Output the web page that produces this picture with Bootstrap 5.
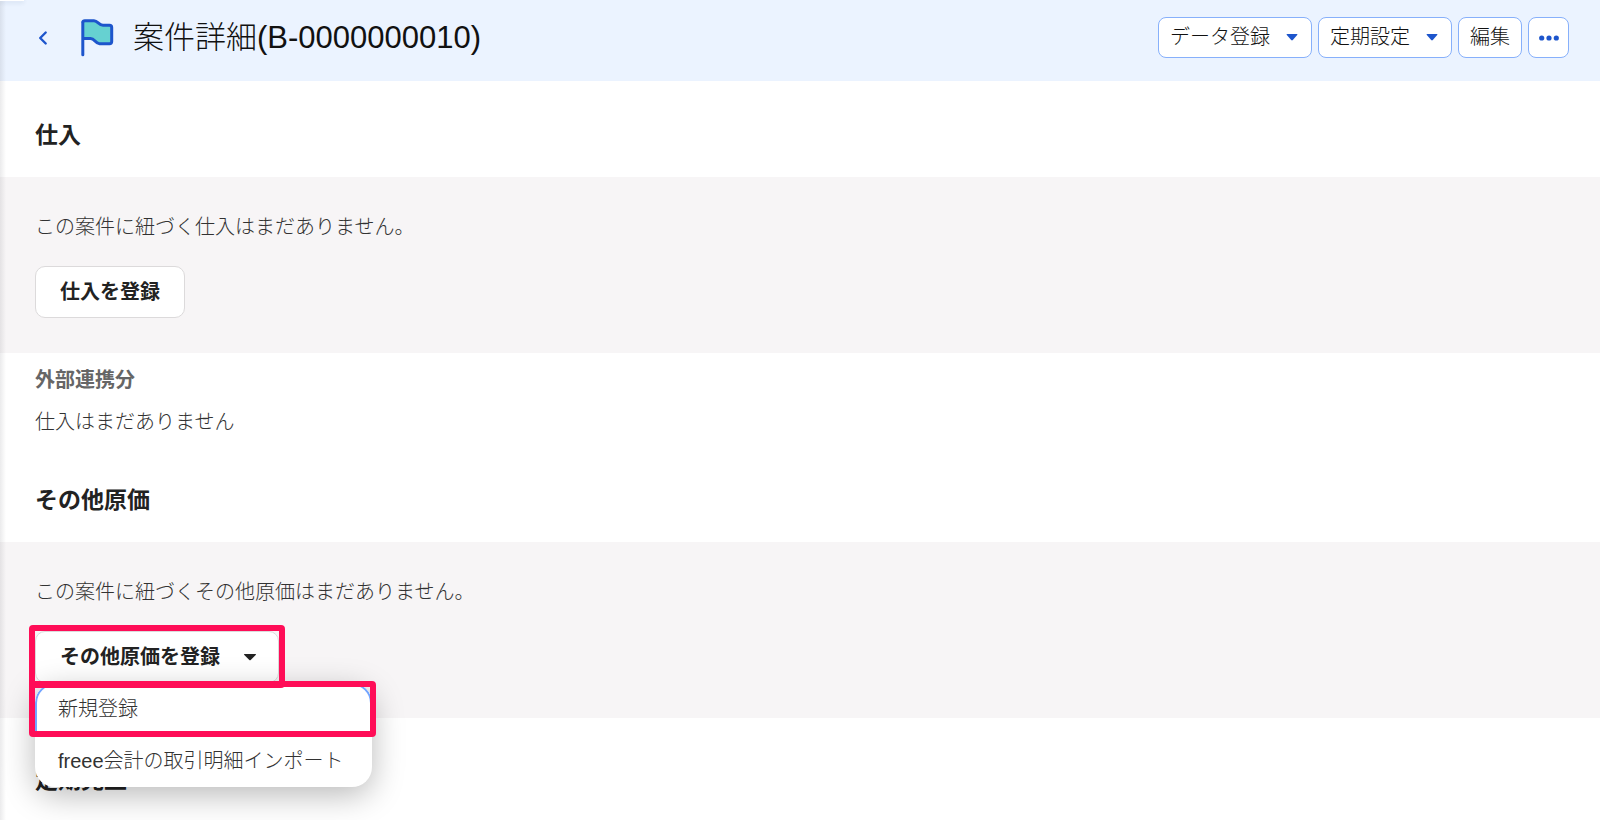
<!DOCTYPE html>
<html lang="ja">
<head>
<meta charset="utf-8">
<meta name="viewport" content="width=device-width, initial-scale=1">
<title>案件詳細</title>
<link href="https://cdn.jsdelivr.net/npm/bootstrap@5.3.0/dist/css/bootstrap.min.css" rel="stylesheet">
<style>
  body { font-family: "Liberation Sans", "Noto Sans CJK JP", sans-serif; font-size: 20px; line-height: 30px; font-weight: 300; color: #323232; background: #fff; overflow: hidden; }
  .edge-shade { position: absolute; inset: 0 auto 0 0; width: 6px; background: linear-gradient(to right, rgba(60,60,70,.1), rgba(60,60,70,0)); pointer-events: none; }
  .edge-tab { position: absolute; left: 0; top: 0; width: 24px; height: 1px; background: #fff; box-shadow: 0 1px 4px rgba(40,70,120,.3); }
  .page-head { background: #ebf3ff; height: 81px; padding: 0 31px 6px 35px; }
  .page-title { font-size: 31px; line-height: 40px; font-weight: 300; color: #111; }
  .back-link { width: 46px; padding-left: 2px; }
  .flag-icon { margin-right: 19px; }
  .head-btn { height: 41px; padding: 0 11px 2px; border: 1px solid #87b0fb; border-radius: 8px; background: #fff; color: #111; font-size: 20px; line-height: 30px; font-weight: 300; }
  .head-btn.with-caret { padding-right: 13px; gap: 16px; }
  .head-btn.dots { width: 41px; padding: 0; }
  .section-title { font-size: 23px; line-height: 34px; font-weight: 700; color: #222; padding: 37px 35px 25px; }
  .empty-panel { background: #f7f5f6; padding: 35px; }
  .empty-panel p { margin-bottom: 24px; }
  .main-btn { height: 52px; padding: 0 24px; border: 1px solid #dcdadb; border-radius: 10px; background: #fff; color: #222; font-size: 20px; line-height: 30px; font-weight: 700; }
  .main-btn.with-caret { gap: 23px; padding-right: 21px; }
  .linked { padding: 12px 35px 9px; }
  .linked h3 { font-size: 20px; line-height: 30px; font-weight: 700; color: #666; margin-bottom: 12px; }
  .action-menu { --bs-dropdown-min-width: 0; top: 100%; left: 0; width: 337px; border: 0; border-radius: 20px; padding: 0; box-shadow: 0 8px 32px rgba(0,0,0,.28); overflow: hidden; }
  .action-menu .dropdown-item { font-size: 20px; line-height: 30px; font-weight: 300; color: #323232; height: 52px; padding: 11px 23px; }
  .action-menu .dropdown-item.focused { box-shadow: inset 0 0 0 2px #73a5ff; border-radius: 20px 20px 0 0; }
  .callout-frame { position: absolute; border: 6px solid #ff0d57; border-radius: 4px; pointer-events: none; z-index: 1010; }
  .frame-button { inset: -6px -6px -5px; }
  .frame-item { left: -6px; top: 50px; width: 347px; height: 56px; }
</style>
</head>
<body>
<div class="position-relative min-vh-100">
  <header class="page-head d-flex align-items-center justify-content-between">
    <div class="d-flex align-items-center">
      <a href="#" class="back-link d-flex" aria-label="戻る">
        <svg width="12" height="16" viewBox="0 0 12 16" fill="none" stroke="#1d55cc" stroke-width="2.4" stroke-linecap="round" stroke-linejoin="round"><path d="M8.700 2.500 3.200 8l5.500 5.500"/></svg>
      </a>
      <svg class="flag-icon" width="33" height="38" viewBox="0 0 33 38" aria-hidden="true"><path d="M1.800 3.500Q1.800 1.800 3.800 1.800H13C17 1.800 17.500 6.200 22 6.200H28.500Q30.700 6.200 30.700 8.400V22.500Q30.700 24.700 28.500 24.700H18.500C14 24.700 14 19.500 9.500 19.500H1.800" fill="#66d1d1" stroke="#1d55cc" stroke-width="3" stroke-linejoin="round"/><path d="M1.800 3.500V35.800" fill="none" stroke="#1d55cc" stroke-width="3" stroke-linecap="round"/></svg>
      <h1 class="page-title mb-0">案件詳細(B-0000000010)</h1>
    </div>
    <div class="d-flex" style="gap:6px">
      <button type="button" class="head-btn with-caret d-flex align-items-center">データ登録<svg width="12" height="8" viewBox="0 0 12 8" fill="#1d55cc"><path d="M1.200 1H10.800Q12 1 11.200 2L6.800 7Q6 7.800 5.200 7L.8 2Q0 1 1.200 1"/></svg></button>
      <button type="button" class="head-btn with-caret d-flex align-items-center">定期設定<svg width="12" height="8" viewBox="0 0 12 8" fill="#1d55cc"><path d="M1.200 1H10.800Q12 1 11.200 2L6.800 7Q6 7.800 5.200 7L.8 2Q0 1 1.200 1"/></svg></button>
      <button type="button" class="head-btn">編集</button>
      <button type="button" class="head-btn dots d-flex align-items-center justify-content-center" aria-label="その他"><svg width="20" height="6" viewBox="0 0 20 6" fill="#1d55cc"><circle cx="2.700" cy="3" r="2.600"/><circle cx="10" cy="3" r="2.600"/><circle cx="17.300" cy="3" r="2.600"/></svg></button>
    </div>
  </header>
  <main>
    <section>
      <h2 class="section-title mb-0">仕入</h2>
      <div class="empty-panel">
        <p>この案件に紐づく仕入はまだありません。</p>
        <button type="button" class="main-btn d-block">仕入を登録</button>
      </div>
      <div class="linked">
        <h3>外部連携分</h3>
        <p class="mb-0">仕入はまだありません</p>
      </div>
    </section>
    <section>
      <h2 class="section-title mb-0">その他原価</h2>
      <div class="empty-panel">
        <p>この案件に紐づくその他原価はまだありません。</p>
        <div class="dropdown d-inline-block align-top">
          <button type="button" class="main-btn with-caret d-flex align-items-center" aria-expanded="true">その他原価を登録<svg width="14" height="8" viewBox="0 0 14 8" fill="#222"><path d="M1.500 1H12.500Q13.500 1 12.700 2L7.700 7Q7 7.600 6.300 7L1.300 2Q.5 1 1.500 1"/></svg></button>
          <ul class="dropdown-menu action-menu show">
            <li><a class="dropdown-item focused" href="#">新規登録</a></li>
            <li><a class="dropdown-item" href="#">freee会計の取引明細インポート</a></li>
          </ul>
          <div class="callout-frame frame-button"></div>
          <div class="callout-frame frame-item"></div>
        </div>
      </div>
    </section>
    <section class="pt-2">
      <h2 class="section-title mb-0 pb-0">定期売上</h2>
    </section>
  </main>
  <div class="edge-shade"></div>
  <div class="edge-tab"></div>
</div>
<script src="https://cdn.jsdelivr.net/npm/bootstrap@5.3.0/dist/js/bootstrap.bundle.min.js"></script>
</body>
</html>
